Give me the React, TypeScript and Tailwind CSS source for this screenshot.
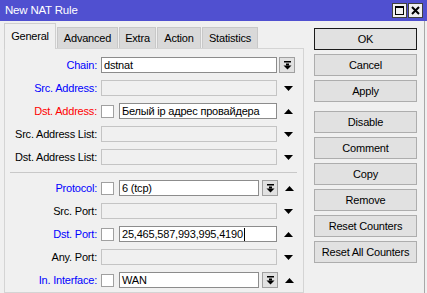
import React from 'react'

type Kind = 'blue' | 'red' | 'black'

const labelColor: Record<Kind, string> = {
  blue: 'text-[#0000ff]',
  red: 'text-[#ff0000]',
  black: 'text-black',
}

function Expand() {
  return (
    <svg width="9" height="9" viewBox="0 0 9 9">
      <rect x="1" y="0" width="7" height="1.5" fill="#000" />
      <rect x="3" y="2.5" width="3" height="2" fill="#000" />
      <path d="M0.5 4.5 H8.5 L4.5 8.5 Z" fill="#000" />
    </svg>
  )
}

function Arrow({ up }: { up?: boolean }) {
  return (
    <div className="w-[18px] h-[16px] flex items-center justify-center ml-[2px]">
      <svg width="9" height="5" viewBox="0 0 9 5">
        <path d={up ? 'M0 5 H9 L4.5 0 Z' : 'M0 0 H9 L4.5 5 Z'} fill="#000" />
      </svg>
    </div>
  )
}

function DropButton() {
  return (
    <div className="w-[16px] h-[16px] border border-[#a0a0a0] bg-[#e1e1e1] flex items-center justify-center">
      <Expand />
    </div>
  )
}

function Check() {
  return <div className="w-[13px] h-[13px] border border-[#a0a0a0] bg-white mr-[5px]" />
}

function Field({ value, width, disabled, cursor }: { value?: string; width: string; disabled?: boolean; cursor?: boolean }) {
  return (
    <div
      className={`${width} h-[16px] border flex items-center pl-[2px] overflow-hidden whitespace-nowrap ${
        disabled ? 'bg-[#f0f0f0] border-[#c4c4c4]' : 'bg-white border-[#8c8c8c]'
      }`}
    >
      {value}
      {cursor && <span className="inline-block w-px h-[13px] bg-black ml-px" />}
    </div>
  )
}

function Row({ label, kind, children }: { label: string; kind: Kind; children: React.ReactNode }) {
  return (
    <div className="flex items-center h-[16px]">
      <div className={`w-[92px] text-right mr-[4px] ${labelColor[kind]}`}>{label}</div>
      {children}
    </div>
  )
}

const buttons1 = ['OK', 'Cancel', 'Apply']
const buttons2 = ['Disable', 'Comment', 'Copy', 'Remove', 'Reset Counters', 'Reset All Counters']

const tabs = [
  { name: 'Advanced', w: 'w-[61px]' },
  { name: 'Extra', w: 'w-[37px]' },
  { name: 'Action', w: 'w-[44px]' },
  { name: 'Statistics', w: 'w-[56px]' },
]

export default function App() {
  return (
    <div className="w-[427px] h-[293px] overflow-hidden bg-[#f0f0f0] text-[11px] tracking-[-0.2px] leading-none text-black font-['Liberation_Sans',Arial,sans-serif] flex flex-col">
      {/* title bar */}
      <div className="h-[21px] bg-[#5050d0] flex items-center shrink-0">
        <div className="text-white text-[11.5px] ml-[5px] flex-1">New NAT Rule</div>
        <div className="w-[15px] h-[15px] border border-[#404040] bg-[#f0f0f0] flex items-center justify-center">
          <div className="w-[9px] h-[9px] border border-black border-t-2" />
        </div>
        <div className="w-[15px] h-[15px] border border-[#404040] bg-[#f0f0f0] flex items-center justify-center ml-px mr-[4px]">
          <svg width="9" height="9" viewBox="0 0 9 9">
            <path d="M1 1 L8 8 M8 1 L1 8" stroke="#000" strokeWidth="2" />
          </svg>
        </div>
      </div>

      <div className="flex flex-1 min-h-0 border-r border-[#a8a8a8] mr-[2px]">
        {/* left part */}
        <div className="w-[300px] ml-[4px] mt-[2px] flex flex-col">
          <div className="flex items-end h-[26px]">
            <div className="relative z-10 w-[52px] h-[26px] bg-[#f0f0f0] border border-b-0 border-[#cfcfcf] flex items-center justify-center">
              General
            </div>
            {tabs.map((t) => (
              <div
                key={t.name}
                className={`${t.w} h-[22px] ml-px bg-[#d9d9d9] border border-b-0 border-[#c8c8c8] flex items-center justify-center`}
              >
                {t.name}
              </div>
            ))}
          </div>
          <div className="flex-1 -mt-px border border-[#d4d4d4] bg-[#f0f0f0] pt-[8px] flex flex-col">
            <div className="flex flex-col gap-[7px]">
              <Row label="Chain:" kind="blue">
                <Field value="dstnat" width="w-[176px]" />
                <div className="ml-[2px]">
                  <DropButton />
                </div>
              </Row>
              <Row label="Src. Address:" kind="blue">
                <Field width="w-[176px]" disabled />
                <Arrow />
              </Row>
              <Row label="Dst. Address:" kind="red">
                <Check />
                <Field value="Белый ip адрес провайдера" width="w-[158px]" />
                <Arrow up />
              </Row>
              <Row label="Src. Address List:" kind="black">
                <Field width="w-[176px]" disabled />
                <Arrow />
              </Row>
              <Row label="Dst. Address List:" kind="black">
                <Field width="w-[176px]" disabled />
                <Arrow />
              </Row>
            </div>
            <div className="h-px bg-[#c8c8c8] ml-[5px] mr-[6px] mt-[7px] mb-[7px]" />
            <div className="flex flex-col gap-[7px]">
              <Row label="Protocol:" kind="blue">
                <Check />
                <Field value="6 (tcp)" width="w-[140px]" />
                <div className="ml-[3px]">
                  <DropButton />
                </div>
                <Arrow up />
              </Row>
              <Row label="Src. Port:" kind="black">
                <Field width="w-[176px]" disabled />
                <Arrow />
              </Row>
              <Row label="Dst. Port:" kind="blue">
                <Check />
                <Field value="25,465,587,993,995,4190" width="w-[158px]" cursor />
                <Arrow up />
              </Row>
              <Row label="Any. Port:" kind="black">
                <Field width="w-[176px]" disabled />
                <Arrow />
              </Row>
              <Row label="In. Interface:" kind="blue">
                <Check />
                <Field value="WAN" width="w-[140px]" />
                <div className="ml-[3px]">
                  <DropButton />
                </div>
                <Arrow up />
              </Row>
            </div>
          </div>
        </div>

        {/* right buttons */}
        <div className="ml-[10px] mt-[7px] w-[103px] flex flex-col">
          <div className="flex flex-col gap-[4px]">
            {buttons1.map((b, i) => (
              <div
                key={b}
                className={`h-[22px] border flex items-center justify-center bg-[#e1e1e1] ${
                  i === 0 ? 'border-[#1a1a1a]' : 'border-[#adadad]'
                }`}
              >
                {b}
              </div>
            ))}
          </div>
          <div className="flex flex-col gap-[4px] mt-[9px]">
            {buttons2.map((b) => (
              <div key={b} className="h-[22px] border border-[#adadad] bg-[#e1e1e1] flex items-center justify-center">
                {b}
              </div>
            ))}
          </div>
        </div>
      </div>
    </div>
  )
}
